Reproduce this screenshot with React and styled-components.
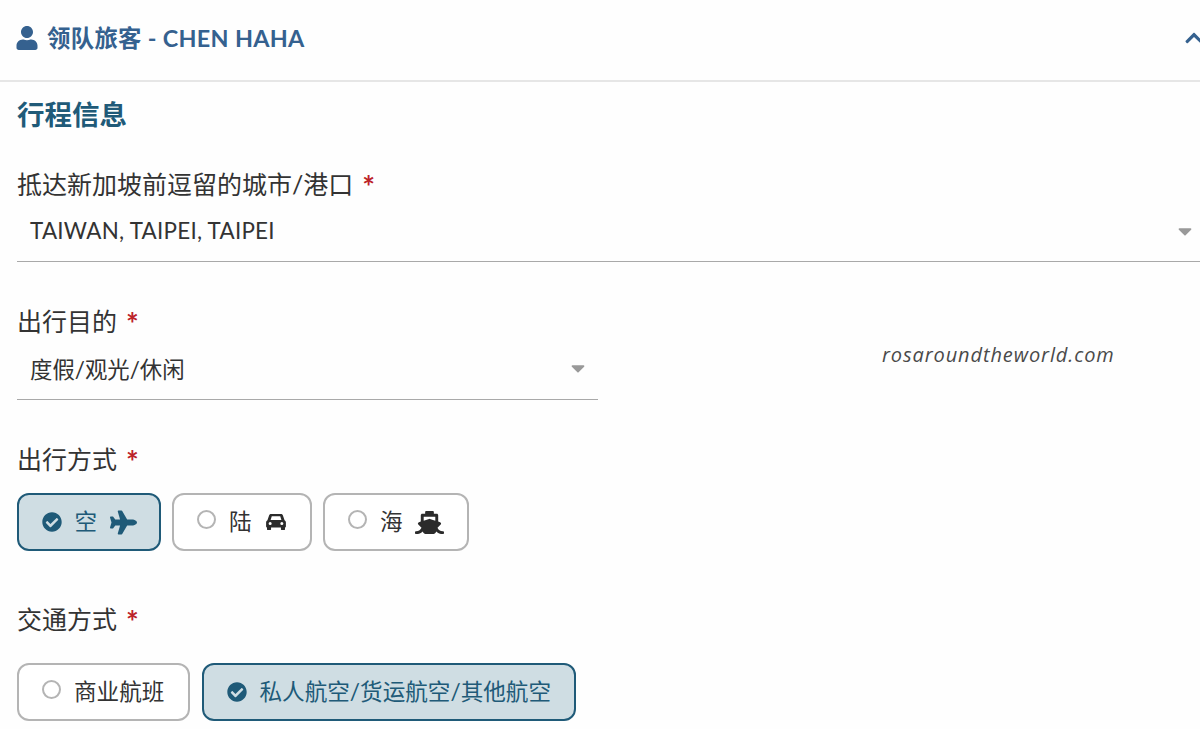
import React from 'react';
import styled, { createGlobalStyle } from 'styled-components';
import { FaUser, FaChevronUp, FaPlane, FaShip, FaCheckCircle, FaCaretDown } from 'react-icons/fa';

const GlobalStyle = createGlobalStyle`
  html, body {
    margin: 0;
    padding: 0;
    background: #fff;
  }
  body {
    font-family: Lato, "Noto Sans CJK SC", sans-serif;
  }
`;

const Page = styled.div`
  position: relative;
  width: 1200px;
  height: 729px;
  overflow: hidden;
  background: #fefefe;
`;

const Header = styled.header`
  display: flex;
  align-items: center;
  justify-content: space-between;
  height: 80px;
  padding: 0 0 4px 17px;
  box-sizing: border-box;
  color: #35618f;
`;

const Divider = styled.div`
  height: 2px;
  background: #e6e6e6;
`;

const HeaderTitle = styled.div`
  display: flex;
  align-items: center;
  gap: 8px;
  font-size: 23.4px;
  font-weight: 700;
  line-height: 28px;
  letter-spacing: 0.3px;
`;

const UserIcon = styled(FaUser)`
  width: 24px;
  height: 24px;
  margin-left: -2px;
`;

const Chevron = styled(FaChevronUp)`
  width: 20px;
  height: 20px;
  margin-right: -4px;
`;

const Content = styled.main`
  padding: 15px 0 0 17px;
`;

const SectionTitle = styled.h2`
  margin: 0 0 33px;
  font-size: 27.5px;
  line-height: 36px;
  font-weight: 700;
  color: #205a78;
`;

const Label = styled.div`
  font-size: 25px;
  line-height: 36px;
  color: #333;
`;

const Star = styled.span`
  color: #bc2329;
  margin-left: 9px;
  font-size: 30px;
  line-height: 0;
  vertical-align: -4px;
  font-weight: 700;
`;

const Select = styled.div`
  display: flex;
  align-items: center;
  justify-content: space-between;
  box-sizing: border-box;
  width: ${(p) => p.$width}px;
  height: ${(p) => p.$height}px;
  padding: 0 ${(p) => p.$right}px 2px 13px;
  border-bottom: 1px solid #a9a9a9;
  font-size: 22.4px;
  letter-spacing: ${(p) => p.$spacing || 0}px;
  color: #333;
  margin-bottom: 41px;
`;

const Caret = styled(FaCaretDown)`
  width: 14px;
  height: 22px;
  color: #999;
`;

const OptionRow = styled.div`
  display: flex;
  gap: ${(p) => p.$gap}px;
  margin-top: ${(p) => p.$top}px;
  margin-bottom: 50px;
`;

const Option = styled.div`
  display: flex;
  align-items: center;
  box-sizing: border-box;
  width: ${(p) => p.$width}px;
  height: 58px;
  padding-left: ${(p) => (p.$active ? 22.5 : 23)}px;
  border-radius: 12px;
  border: ${(p) => (p.$active ? '2.5px solid #1f5a78' : '2px solid #b4b4b4')};
  background: ${(p) => (p.$active ? '#cfdde3' : '#fff')};
  color: ${(p) => (p.$active ? '#205a78' : '#333')};
  font-size: 22.6px;
  line-height: 30px;
`;

const Check = styled(FaCheckCircle)`
  width: 20px;
  height: 20px;
  color: #1f5a78;
  margin-right: 13px;
  flex: none;
`;

const Radio = styled.span`
  width: 19px;
  height: 19px;
  box-sizing: border-box;
  border: 2px solid #b4b4b4;
  border-radius: 50%;
  margin: -5px 13px 0 0;
  flex: none;
`;

const ModeIcon = styled.span`
  display: flex;
  margin-left: ${(p) => p.$gap}px;
  font-size: ${(p) => p.$size}px;
  color: ${(p) => (p.$active ? '#1f5a78' : '#2b2b2b')};
`;

const Watermark = styled.div`
  position: absolute;
  left: 882px;
  top: 341px;
  font-family: "Open Sans", sans-serif;
  font-style: italic;
  font-size: 20px;
  line-height: 28px;
  letter-spacing: 0.9px;
  color: #4a4a4a;
`;

const CarIcon = () => (
  <svg width="22" height="18" viewBox="0 0 24 20" fill="currentColor" fillRule="evenodd">
    <path d="M6.6 1h10.8c1 0 1.8.6 2.2 1.5L21.5 8c1 .5 1.5 1.5 1.5 2.5V15c0 .6-.4 1-1 1v2c0 .6-.4 1-1 1h-2.5c-.6 0-1-.4-1-1v-2h-11v2c0 .6-.4 1-1 1H3c-.6 0-1-.4-1-1v-2c-.6 0-1-.4-1-1v-4.500C1 9.500 1.500 8.500 2.500 8l1.900-5.500C4.800 1.600 5.600 1 6.600 1ZM7.300 3.600 6 7.800h12l-1.300-4.200H7.300ZM5.500 10a1.700 1.700 0 1 0 0 3.400 1.700 1.700 0 0 0 0-3.400ZM18.500 10a1.700 1.700 0 1 0 0 3.400 1.700 1.700 0 0 0 0-3.400Z" />
  </svg>
);

const App = () => (
  <Page>
    <GlobalStyle />
    <Header>
      <HeaderTitle>
        <UserIcon />
        领队旅客 - CHEN HAHA
      </HeaderTitle>
      <Chevron />
    </Header>
    <Divider />
    <Content>
      <SectionTitle>行程信息</SectionTitle>
      <Label>
        抵达新加坡前逗留的城市/港口<Star>*</Star>
      </Label>
      <Select $width={1183} $height={60} $right={8} $spacing={0.25}>
        TAIWAN, TAIPEI, TAIPEI
        <Caret />
      </Select>
      <Label>
        出行目的<Star>*</Star>
      </Label>
      <Select $width={581} $height={61} $right={13}>
        度假/观光/休闲
        <Caret />
      </Select>
      <Label>
        出行方式<Star>*</Star>
      </Label>
      <OptionRow $gap={11} $top={16}>
        <Option $active $width={144}>
          <Check />空
          <ModeIcon $active $gap={13} $size={27}><FaPlane /></ModeIcon>
        </Option>
        <Option $width={140}>
          <Radio />陆
          <ModeIcon $gap={13} $size={22}><CarIcon /></ModeIcon>
        </Option>
        <Option $width={146}>
          <Radio />海
          <ModeIcon $gap={12} $size={29}><FaShip /></ModeIcon>
        </Option>
      </OptionRow>
      <Label>
        交通方式<Star>*</Star>
      </Label>
      <OptionRow $gap={12} $top={26}>
        <Option $width={173}>
          <Radio />商业航班
        </Option>
        <Option $active $width={374}>
          <Check />私人航空/货运航空/其他航空
        </Option>
      </OptionRow>
    </Content>
    <Watermark>rosaroundtheworld.com</Watermark>
  </Page>
);

export default App;
